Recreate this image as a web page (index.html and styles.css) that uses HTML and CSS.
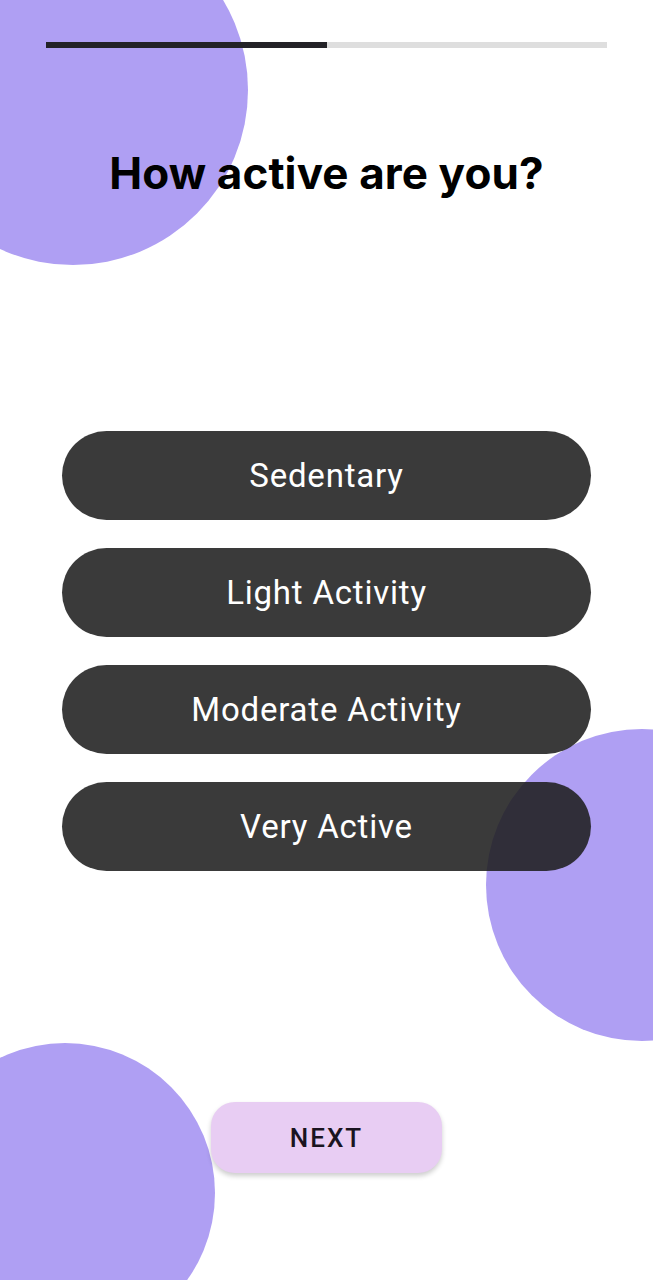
FILE: index.html
```html
<!DOCTYPE html>
<html lang="en">
<head>
<meta charset="utf-8">
<title>How active are you?</title>
<link rel="stylesheet" href="styles.css">
</head>
<body>
<div class="screen">
  <div class="blob blob-top"></div>
  <div class="blob blob-right"></div>
  <div class="blob blob-bottom"></div>

  <div class="progress"><div class="progress-fill"></div></div>
  <h1 class="title">How active are you?</h1>

  <div class="options">
    <button class="option">Sedentary</button>
    <button class="option">Light Activity</button>
    <button class="option">Moderate Activity</button>
    <button class="option">Very Active</button>
  </div>

  <div class="footer">
    <button class="next">NEXT</button>
  </div>
</div>
</body>
</html>
```
FILE: styles.css
```css
* { box-sizing: border-box; }
html, body { margin: 0; padding: 0; background: #fff; }
.screen {
  position: relative;
  width: 653px;
  height: 1280px;
  overflow: hidden;
  display: flex;
  flex-direction: column;
  font-family: Roboto, "Noto Sans", sans-serif;
}
.blob {
  position: absolute;
  border-radius: 50%;
  background: #af9ff3;
  z-index: 0;
}
.blob-top { left: -102px; top: -85px; width: 350px; height: 350px; }
.blob-right { left: 486px; top: 729px; width: 312px; height: 312px; }
.blob-bottom { left: -85px; top: 1043px; width: 300px; height: 300px; }

.progress {
  position: relative;
  z-index: 1;
  margin: 42px 46px 0;
  height: 6px;
  background: #dedede;
}
.progress-fill { width: 50%; height: 100%; background: #232227; }

.title {
  position: relative;
  z-index: 1;
  margin: 99px 0 0;
  text-align: center;
  font-family: Inter, "Noto Sans", sans-serif;
  font-weight: 700;
  font-size: 44px;
  line-height: 52px;
  letter-spacing: 0.1px;
  color: #000;
}

.options {
  position: relative;
  z-index: 1;
  margin: 232px 62px 0;
  display: flex;
  flex-direction: column;
  gap: 28px;
}
.option {
  height: 89px;
  border: none;
  border-radius: 45px;
  background: rgba(30, 30, 30, 0.875);
  color: #fff;
  font-family: Roboto, sans-serif;
  font-size: 33px;
  font-weight: 400;
  letter-spacing: 0.8px;
  padding: 0;
}

.footer {
  position: relative;
  z-index: 1;
  margin-top: 231px;
  display: flex;
  justify-content: center;
}
.next {
  width: 231px;
  height: 71px;
  border: none;
  border-radius: 24px;
  background: #e8cdf3;
  color: #1a1420;
  font-family: Roboto, sans-serif;
  font-size: 26px;
  font-weight: 500;
  letter-spacing: 2px;
  box-shadow: 0 3px 5px rgba(0, 0, 0, 0.2);
  padding: 0;
}
```
